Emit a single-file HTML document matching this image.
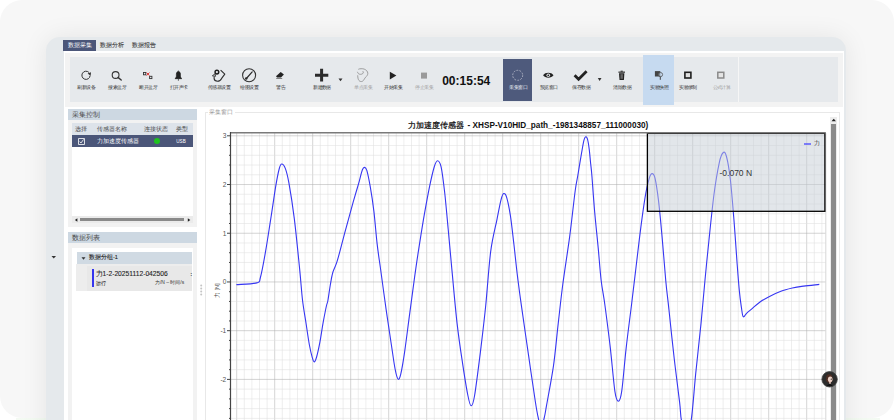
<!DOCTYPE html>
<html><head><meta charset="utf-8">
<style>
html,body{margin:0;padding:0;}
body{width:894px;height:420px;overflow:hidden;background:#fff;position:relative;font-family:"Liberation Sans",sans-serif;}
.abs{position:absolute;}
.t{position:absolute;white-space:nowrap;line-height:1;}
.lbl{position:absolute;white-space:nowrap;font-size:4.5px;letter-spacing:-0.55px;line-height:5px;color:#383838;transform:translateX(calc(-50% + 0.4px));}
.dis{color:#a2a2a2;}
.ico{position:absolute;}
</style></head><body>
<div class="abs" style="left:0;top:0;width:894px;height:418px;border-radius:22px;background:#f7f7f7;"></div>
<div class="abs" style="left:16px;top:418px;width:864px;height:2px;background:linear-gradient(90deg,#f4faf3,#e8f5e6 20%,#e8f5e6 80%,#f4faf3);"></div>
<div class="abs" style="left:46px;top:37px;width:800px;height:420px;border-radius:14px;background:#e5e9ec;box-shadow:0 0 26px rgba(0,0,0,0.08);"></div>
<!-- tabs -->
<div class="abs" style="left:63.4px;top:40px;width:32.6px;height:10.8px;background:#4b5679;"></div>
<div class="t" style="left:68.2px;top:42.7px;font-size:5.6px;color:#fff;">数据采集</div>
<div class="t" style="left:100px;top:42.7px;font-size:5.5px;color:#444;-webkit-text-stroke:0.1px #444;">数据分析</div>
<div class="t" style="left:132.2px;top:42.7px;font-size:5.5px;color:#444;-webkit-text-stroke:0.1px #444;">数据报告</div>
<!-- content -->
<div class="abs" style="left:64px;top:51px;width:780px;height:380px;background:#fff;"></div>
<div class="abs" style="left:65px;top:52.5px;width:778px;height:54px;background:#f3f3f3;"></div>
<div class="abs" style="left:70px;top:57px;width:768px;height:45px;background:#e6e9ec;"></div>
<div class="abs" style="left:737.6px;top:57px;width:1.6px;height:45px;background:#f6f6f6;"></div>
<div class="abs" style="left:503.1px;top:58.7px;width:28.9px;height:42.1px;background:#4e5a7c;"></div>
<div class="abs" style="left:643px;top:54.8px;width:31.2px;height:50px;background:#c6daf0;"></div>

<svg class="ico" style="left:0;top:0" width="894" height="110" viewBox="0 0 894 110">
<!-- refresh -->
<path d="M88.9,72.4 A4.1,4.1 0 1 0 90.1,75.6" fill="none" stroke="#333" stroke-width="1"/>
<path d="M87.6,73.4 L91,72.2 L90.6,75.8Z" fill="#333"/>
<!-- search -->
<circle cx="115.6" cy="75" r="3.4" fill="none" stroke="#333" stroke-width="1.1"/>
<path d="M118,77.4 L121.2,80" stroke="#333" stroke-width="1.4" stroke-linecap="round"/>
<!-- bt disconnect -->
<rect x="143.5" y="72.5" width="2.3" height="2.3" fill="none" stroke="#333" stroke-width="0.9"/>
<rect x="149.6" y="76.3" width="2.3" height="2.3" fill="none" stroke="#333" stroke-width="0.9"/>
<path d="M146.6,72.6 L149.4,75.6 M149.4,72.6 L146.6,75.6" stroke="#e02020" stroke-width="0.9"/>
<!-- bell -->
<path d="M178.4,70.6 L178.4,71.4 M175.6,78.2 C176.6,77 176.4,75.6 176.4,74.4 C176.4,72.6 177.2,71.6 178.4,71.6 C179.6,71.6 180.4,72.6 180.4,74.4 C180.4,75.6 180.2,77 181.2,78.2Z" fill="#222" stroke="#222" stroke-width="0.8"/>
<rect x="174.9" y="78.2" width="7" height="0.9" fill="#222"/>
<circle cx="178.4" cy="79.9" r="0.6" fill="#222"/>
<!-- sensor settings -->
<path d="M220.6,70.2 L224.8,74.2 L221.8,78.2 Q220.2,81.3 217.6,81.3 Q214.3,81.1 214.1,78.4 L214.2,76.4" fill="none" stroke="#2e2e2e" stroke-width="1.1" stroke-linejoin="round"/>
<circle cx="216.9" cy="72.1" r="1.85" fill="none" stroke="#1e1e1e" stroke-width="1.45"/>
<path d="M215,73.8 L212.3,75.8 L215.6,76.3 Z" fill="none" stroke="#333" stroke-width="0.9" stroke-linejoin="round"/>
<!-- draw settings -->
<circle cx="249.1" cy="75.2" r="6.5" fill="none" stroke="#333" stroke-width="1.1"/>
<path d="M252.2,71.9 L246.8,78" stroke="#2a2a2a" stroke-width="1.2" stroke-linecap="round"/>
<circle cx="246.2" cy="78.4" r="1.25" fill="#2a2a2a"/>
<!-- eraser -->
<path d="M276,76.3 L280.7,72 L283.9,74.4 L281,77.4 L277,77.6 Z" fill="#222"/>
<rect x="276.2" y="78.2" width="6" height="0.8" fill="#666"/>
<!-- plus -->
<path d="M321.6,68.8 L321.6,81.6 M315,75.2 L328.3,75.2" stroke="#2b2b2b" stroke-width="3"/>
<path d="M338.5,78.6 L342.5,78.6 L340.5,81.3Z" fill="#333"/>
<!-- single point -->
<path d="M358.3,69.3 C359.5,68.6 362.5,68.5 364.2,69.1 C366.2,69.8 367.8,71.5 367.8,73.3 C367.8,75.2 366.6,76.3 365.6,77.2 C364.6,78.2 363.9,80.5 362.4,81.3 C361.4,81.8 359.8,81.6 358.9,80.4 C358,79.2 357.8,77.6 357.7,75.3" fill="none" stroke="#8a8a8a" stroke-width="0.8"/>
<path d="M357.4,71.8 C357.9,73.2 358.3,73.8 359.5,74.2 C361,74.6 362.8,74 363.3,72.9 C363.4,72 363.1,71.4 362.6,71.1" fill="none" stroke="#8a8a8a" stroke-width="0.8"/>
<!-- play -->
<path d="M389.8,71.8 L396.4,75.6 L389.8,79.4Z" fill="#222"/>
<!-- stop -->
<rect x="421" y="72.6" width="6" height="6" fill="#9a9a9a"/>
<!-- dashed circle -->
<circle cx="517.7" cy="75.3" r="5" fill="none" stroke="#a9aec0" stroke-width="1" stroke-dasharray="1.8 1.3"/>
<!-- eye -->
<path d="M543.1,75.3 C545,72 551.6,72 553.5,75.3 C551.6,78.6 545,78.6 543.1,75.3Z" fill="#222"/>
<circle cx="548.3" cy="75.3" r="1.8" fill="#e6e9ec"/>
<circle cx="548.3" cy="75.3" r="0.9" fill="#222"/>
<!-- check -->
<path d="M574.6,75.2 L578.6,79.2 L586.6,71.2" fill="none" stroke="#222" stroke-width="2.8"/>
<path d="M597.8,78.1 L601.5,78.1 L599.65,81Z" fill="#333"/>
<!-- trash -->
<rect x="618.4" y="71.6" width="6.6" height="1.1" fill="#222"/>
<rect x="620.6" y="70.7" width="2.2" height="1" fill="#222"/>
<path d="M619,73.2 L624.4,73.2 L623.9,80 L619.5,80Z" fill="#222"/>
<rect x="620.5" y="74.2" width="2.4" height="4.6" fill="#666"/>
<!-- snapshot -->
<rect x="654.9" y="71.1" width="5.4" height="5.4" fill="#444"/>
<circle cx="660.5" cy="74.6" r="2.1" fill="rgba(198,218,240,0.5)" stroke="#555" stroke-width="0.8"/>
<path d="M660.3,76.6 L660.3,79.8" stroke="#333" stroke-width="0.9"/>
<!-- record -->
<rect x="684.9" y="72.3" width="6" height="5.7" fill="#e0e0e0" stroke="#1e1e1e" stroke-width="1.6"/>
<!-- formula -->
<rect x="717.8" y="72.3" width="6" height="5.7" fill="#e4e4e4" stroke="#8a8a8a" stroke-width="1.5"/>
</svg>
<div class="lbl" style="left:86px;top:85px;">刷新设备</div>
<div class="lbl" style="left:116.8px;top:85px;">搜索蓝牙</div>
<div class="lbl" style="left:147.7px;top:85px;">断开蓝牙</div>
<div class="lbl" style="left:178.2px;top:85px;">打开声卡</div>
<div class="lbl" style="left:218.5px;top:85px;">传感器设置</div>
<div class="lbl" style="left:249px;top:85px;">绘图设置</div>
<div class="lbl" style="left:280.2px;top:85px;">警告</div>
<div class="lbl" style="left:321.6px;top:85px;">新建数据</div>
<div class="lbl dis" style="left:362.7px;top:85px;">单点采集</div>
<div class="lbl" style="left:393px;top:85px;color:#333;">开始采集</div>
<div class="lbl dis" style="left:424px;top:85px;">停止采集</div>
<div class="t" style="left:442.2px;top:74.5px;font-size:12px;font-weight:bold;color:#111;">00:15:54</div>
<div class="lbl" style="left:517.8px;top:85px;color:#e9ecf3;">采集窗口</div>
<div class="lbl" style="left:548.4px;top:85px;">预览窗口</div>
<div class="lbl" style="left:580.8px;top:85px;">保存数据</div>
<div class="lbl" style="left:621.8px;top:85px;">清除数据</div>
<div class="lbl" style="left:658.8px;top:85px;">实验快照</div>
<div class="lbl" style="left:687.6px;top:85px;color:#333;">实验录制</div>
<div class="lbl dis" style="left:721.1px;top:85px;">公式计算</div>

<!-- left panels -->
<div class="abs" style="left:68px;top:108.6px;width:129.4px;height:118.6px;background:#f2f2f2;"></div>
<div class="abs" style="left:68px;top:108.6px;width:129.4px;height:11px;background:#cdd8e2;"></div>
<div class="t" style="left:71.8px;top:110.8px;font-size:7px;color:#4a4a4a;">采集控制</div>
<div class="abs" style="left:72px;top:123.4px;width:121px;height:99px;background:#fff;"></div>
<div class="abs" style="left:72px;top:123.4px;width:121px;height:11.8px;background:#dde3ea;"></div>
<div class="t" style="left:75px;top:127.1px;font-size:5.5px;color:#4a4a4a;">选择</div>
<div class="t" style="left:96.6px;top:127.1px;font-size:5.5px;color:#4a4a4a;">传感器名称</div>
<div class="t" style="left:143.5px;top:127.1px;font-size:5.5px;color:#4a4a4a;">连接状态</div>
<div class="t" style="left:176.4px;top:127.1px;font-size:5.5px;color:#4a4a4a;">类型</div>
<div class="abs" style="left:72px;top:134.9px;width:121px;height:11.8px;background:#4b5679;"></div>
<svg class="ico" style="left:78px;top:137.7px" width="7" height="7" viewBox="0 0 7 7"><rect x="0.6" y="0.6" width="5.8" height="5.8" fill="none" stroke="#fff" stroke-width="0.8"/><path d="M1.7,3.6 L3,5 L5.6,1.4" fill="none" stroke="#fff" stroke-width="0.8"/></svg>
<div class="t" style="left:96.8px;top:138.9px;font-size:5.5px;color:#fff;">力加速度传感器</div>
<div class="abs" style="left:153.6px;top:137.9px;width:6px;height:6px;border-radius:50%;background:#1ec21e;"></div>
<div class="t" style="left:176.3px;top:139.6px;font-size:4.6px;color:#fff;">USB</div>
<div class="abs" style="left:72px;top:215.5px;width:121px;height:7.5px;background:#ebebeb;"></div>
<div class="abs" style="left:80.2px;top:217.6px;width:104px;height:3.8px;background:#8a8a8a;"></div>
<svg class="ico" style="left:74px;top:216.5px" width="120" height="6" viewBox="0 0 120 6"><path d="M0.9,3 L3.4,1.2 L3.4,4.8Z" fill="#222"/><path d="M116.3,3 L113.8,1.2 L113.8,4.8Z" fill="#222"/></svg>
<!-- panel 2 -->
<div class="abs" style="left:68px;top:232px;width:129.4px;height:200px;background:#f2f2f2;"></div>
<div class="abs" style="left:68px;top:232px;width:129.4px;height:11px;background:#cdd8e2;"></div>
<div class="t" style="left:71.7px;top:234.2px;font-size:7px;color:#4a4a4a;">数据列表</div>
<div class="abs" style="left:72.4px;top:247.5px;width:120.4px;height:200px;background:#fff;"></div>
<div class="abs" style="left:76.8px;top:251.7px;width:114.9px;height:12.5px;background:#d0dae3;"></div>
<svg class="ico" style="left:81px;top:255.5px" width="5" height="5" viewBox="0 0 5 5"><path d="M0.5,1.2 L4.5,1.2 L2.5,3.8Z" fill="#333"/></svg>
<div class="t" style="left:89px;top:255.3px;font-size:5.5px;color:#222;-webkit-text-stroke:0.1px #222;">数据分组-1</div>
<div class="abs" style="left:75.5px;top:264.2px;width:116.2px;height:27px;background:#ededed;"></div>
<div class="abs" style="left:87.4px;top:265.5px;width:104.3px;height:25px;background:#e8e8e8;"></div>
<div class="abs" style="left:92.2px;top:269px;width:1.6px;height:18px;background:#3535ee;"></div>
<div class="t" style="left:95.5px;top:271px;font-size:6.7px;color:#222;-webkit-text-stroke:0.1px #222;">力1-2-20251112-042506</div>
<div class="t" style="left:190.3px;top:270.8px;font-size:6px;font-weight:bold;color:#222;">:</div>
<div class="t" style="left:95.5px;top:281.6px;font-size:4.6px;color:#333;-webkit-text-stroke:0.1px #333;">运行</div>
<div class="t" style="left:155px;top:281.4px;font-size:4.9px;color:#333;">力/N – 时间/s</div>
<svg class="ico" style="left:48px;top:253px" width="10" height="8" viewBox="0 0 10 8"><path d="M3.5,3 L8,3 L5.75,5.6Z" fill="#333"/></svg>
<!-- splitter dots -->
<svg class="ico" style="left:199px;top:284px" width="5" height="12" viewBox="0 0 5 12"><g fill="#c4c4c4"><circle cx="2.2" cy="1.6" r="1"/><circle cx="2.2" cy="4.6" r="1"/><circle cx="2.2" cy="7.6" r="1"/><circle cx="2.2" cy="10.6" r="1"/></g></svg>
<!-- chart groupbox -->
<div class="abs" style="left:205px;top:111.9px;width:635.3px;height:320px;border:1px solid #e8e8e8;box-sizing:border-box;background:#fff;"></div>
<div class="t" style="left:207.5px;top:109.5px;padding:0 1.5px;background:#fff;font-size:5.6px;color:#999;">采集窗口</div>
<svg class="abs" style="left:0;top:0" width="894" height="420" viewBox="0 0 894 420">
<rect x="230.5" y="133" width="595.3" height="297" fill="#fff"/>
<line x1="236.70" y1="133" x2="236.70" y2="430" stroke="#b0b0b0" stroke-width="0.55"/><line x1="244.30" y1="133" x2="244.30" y2="430" stroke="#e0e0e0" stroke-width="0.55"/><line x1="251.90" y1="133" x2="251.90" y2="430" stroke="#e0e0e0" stroke-width="0.55"/><line x1="259.50" y1="133" x2="259.50" y2="430" stroke="#e0e0e0" stroke-width="0.55"/><line x1="267.10" y1="133" x2="267.10" y2="430" stroke="#e0e0e0" stroke-width="0.55"/><line x1="274.70" y1="133" x2="274.70" y2="430" stroke="#b0b0b0" stroke-width="0.55"/><line x1="282.30" y1="133" x2="282.30" y2="430" stroke="#e0e0e0" stroke-width="0.55"/><line x1="289.90" y1="133" x2="289.90" y2="430" stroke="#e0e0e0" stroke-width="0.55"/><line x1="297.50" y1="133" x2="297.50" y2="430" stroke="#e0e0e0" stroke-width="0.55"/><line x1="305.10" y1="133" x2="305.10" y2="430" stroke="#e0e0e0" stroke-width="0.55"/><line x1="312.70" y1="133" x2="312.70" y2="430" stroke="#b0b0b0" stroke-width="0.55"/><line x1="320.30" y1="133" x2="320.30" y2="430" stroke="#e0e0e0" stroke-width="0.55"/><line x1="327.90" y1="133" x2="327.90" y2="430" stroke="#e0e0e0" stroke-width="0.55"/><line x1="335.50" y1="133" x2="335.50" y2="430" stroke="#e0e0e0" stroke-width="0.55"/><line x1="343.10" y1="133" x2="343.10" y2="430" stroke="#e0e0e0" stroke-width="0.55"/><line x1="350.70" y1="133" x2="350.70" y2="430" stroke="#b0b0b0" stroke-width="0.55"/><line x1="358.30" y1="133" x2="358.30" y2="430" stroke="#e0e0e0" stroke-width="0.55"/><line x1="365.90" y1="133" x2="365.90" y2="430" stroke="#e0e0e0" stroke-width="0.55"/><line x1="373.50" y1="133" x2="373.50" y2="430" stroke="#e0e0e0" stroke-width="0.55"/><line x1="381.10" y1="133" x2="381.10" y2="430" stroke="#e0e0e0" stroke-width="0.55"/><line x1="388.70" y1="133" x2="388.70" y2="430" stroke="#b0b0b0" stroke-width="0.55"/><line x1="396.30" y1="133" x2="396.30" y2="430" stroke="#e0e0e0" stroke-width="0.55"/><line x1="403.90" y1="133" x2="403.90" y2="430" stroke="#e0e0e0" stroke-width="0.55"/><line x1="411.50" y1="133" x2="411.50" y2="430" stroke="#e0e0e0" stroke-width="0.55"/><line x1="419.10" y1="133" x2="419.10" y2="430" stroke="#e0e0e0" stroke-width="0.55"/><line x1="426.70" y1="133" x2="426.70" y2="430" stroke="#b0b0b0" stroke-width="0.55"/><line x1="434.30" y1="133" x2="434.30" y2="430" stroke="#e0e0e0" stroke-width="0.55"/><line x1="441.90" y1="133" x2="441.90" y2="430" stroke="#e0e0e0" stroke-width="0.55"/><line x1="449.50" y1="133" x2="449.50" y2="430" stroke="#e0e0e0" stroke-width="0.55"/><line x1="457.10" y1="133" x2="457.10" y2="430" stroke="#e0e0e0" stroke-width="0.55"/><line x1="464.70" y1="133" x2="464.70" y2="430" stroke="#b0b0b0" stroke-width="0.55"/><line x1="472.30" y1="133" x2="472.30" y2="430" stroke="#e0e0e0" stroke-width="0.55"/><line x1="479.90" y1="133" x2="479.90" y2="430" stroke="#e0e0e0" stroke-width="0.55"/><line x1="487.50" y1="133" x2="487.50" y2="430" stroke="#e0e0e0" stroke-width="0.55"/><line x1="495.10" y1="133" x2="495.10" y2="430" stroke="#e0e0e0" stroke-width="0.55"/><line x1="502.70" y1="133" x2="502.70" y2="430" stroke="#b0b0b0" stroke-width="0.55"/><line x1="510.30" y1="133" x2="510.30" y2="430" stroke="#e0e0e0" stroke-width="0.55"/><line x1="517.90" y1="133" x2="517.90" y2="430" stroke="#e0e0e0" stroke-width="0.55"/><line x1="525.50" y1="133" x2="525.50" y2="430" stroke="#e0e0e0" stroke-width="0.55"/><line x1="533.10" y1="133" x2="533.10" y2="430" stroke="#e0e0e0" stroke-width="0.55"/><line x1="540.70" y1="133" x2="540.70" y2="430" stroke="#b0b0b0" stroke-width="0.55"/><line x1="548.30" y1="133" x2="548.30" y2="430" stroke="#e0e0e0" stroke-width="0.55"/><line x1="555.90" y1="133" x2="555.90" y2="430" stroke="#e0e0e0" stroke-width="0.55"/><line x1="563.50" y1="133" x2="563.50" y2="430" stroke="#e0e0e0" stroke-width="0.55"/><line x1="571.10" y1="133" x2="571.10" y2="430" stroke="#e0e0e0" stroke-width="0.55"/><line x1="578.70" y1="133" x2="578.70" y2="430" stroke="#b0b0b0" stroke-width="0.55"/><line x1="586.30" y1="133" x2="586.30" y2="430" stroke="#e0e0e0" stroke-width="0.55"/><line x1="593.90" y1="133" x2="593.90" y2="430" stroke="#e0e0e0" stroke-width="0.55"/><line x1="601.50" y1="133" x2="601.50" y2="430" stroke="#e0e0e0" stroke-width="0.55"/><line x1="609.10" y1="133" x2="609.10" y2="430" stroke="#e0e0e0" stroke-width="0.55"/><line x1="616.70" y1="133" x2="616.70" y2="430" stroke="#b0b0b0" stroke-width="0.55"/><line x1="624.30" y1="133" x2="624.30" y2="430" stroke="#e0e0e0" stroke-width="0.55"/><line x1="631.90" y1="133" x2="631.90" y2="430" stroke="#e0e0e0" stroke-width="0.55"/><line x1="639.50" y1="133" x2="639.50" y2="430" stroke="#e0e0e0" stroke-width="0.55"/><line x1="647.10" y1="133" x2="647.10" y2="430" stroke="#e0e0e0" stroke-width="0.55"/><line x1="654.70" y1="133" x2="654.70" y2="430" stroke="#b0b0b0" stroke-width="0.55"/><line x1="662.30" y1="133" x2="662.30" y2="430" stroke="#e0e0e0" stroke-width="0.55"/><line x1="669.90" y1="133" x2="669.90" y2="430" stroke="#e0e0e0" stroke-width="0.55"/><line x1="677.50" y1="133" x2="677.50" y2="430" stroke="#e0e0e0" stroke-width="0.55"/><line x1="685.10" y1="133" x2="685.10" y2="430" stroke="#e0e0e0" stroke-width="0.55"/><line x1="692.70" y1="133" x2="692.70" y2="430" stroke="#b0b0b0" stroke-width="0.55"/><line x1="700.30" y1="133" x2="700.30" y2="430" stroke="#e0e0e0" stroke-width="0.55"/><line x1="707.90" y1="133" x2="707.90" y2="430" stroke="#e0e0e0" stroke-width="0.55"/><line x1="715.50" y1="133" x2="715.50" y2="430" stroke="#e0e0e0" stroke-width="0.55"/><line x1="723.10" y1="133" x2="723.10" y2="430" stroke="#e0e0e0" stroke-width="0.55"/><line x1="730.70" y1="133" x2="730.70" y2="430" stroke="#b0b0b0" stroke-width="0.55"/><line x1="738.30" y1="133" x2="738.30" y2="430" stroke="#e0e0e0" stroke-width="0.55"/><line x1="745.90" y1="133" x2="745.90" y2="430" stroke="#e0e0e0" stroke-width="0.55"/><line x1="753.50" y1="133" x2="753.50" y2="430" stroke="#e0e0e0" stroke-width="0.55"/><line x1="761.10" y1="133" x2="761.10" y2="430" stroke="#e0e0e0" stroke-width="0.55"/><line x1="768.70" y1="133" x2="768.70" y2="430" stroke="#b0b0b0" stroke-width="0.55"/><line x1="776.30" y1="133" x2="776.30" y2="430" stroke="#e0e0e0" stroke-width="0.55"/><line x1="783.90" y1="133" x2="783.90" y2="430" stroke="#e0e0e0" stroke-width="0.55"/><line x1="791.50" y1="133" x2="791.50" y2="430" stroke="#e0e0e0" stroke-width="0.55"/><line x1="799.10" y1="133" x2="799.10" y2="430" stroke="#e0e0e0" stroke-width="0.55"/><line x1="806.70" y1="133" x2="806.70" y2="430" stroke="#b0b0b0" stroke-width="0.55"/><line x1="814.30" y1="133" x2="814.30" y2="430" stroke="#e0e0e0" stroke-width="0.55"/><line x1="821.90" y1="133" x2="821.90" y2="430" stroke="#e0e0e0" stroke-width="0.55"/><line x1="230.5" y1="135.80" x2="825.8" y2="135.80" stroke="#b0b0b0" stroke-width="0.55"/><line x1="230.5" y1="145.54" x2="825.8" y2="145.54" stroke="#e0e0e0" stroke-width="0.55"/><line x1="230.5" y1="155.29" x2="825.8" y2="155.29" stroke="#e0e0e0" stroke-width="0.55"/><line x1="230.5" y1="165.03" x2="825.8" y2="165.03" stroke="#e0e0e0" stroke-width="0.55"/><line x1="230.5" y1="174.78" x2="825.8" y2="174.78" stroke="#e0e0e0" stroke-width="0.55"/><line x1="230.5" y1="184.52" x2="825.8" y2="184.52" stroke="#b0b0b0" stroke-width="0.55"/><line x1="230.5" y1="194.26" x2="825.8" y2="194.26" stroke="#e0e0e0" stroke-width="0.55"/><line x1="230.5" y1="204.01" x2="825.8" y2="204.01" stroke="#e0e0e0" stroke-width="0.55"/><line x1="230.5" y1="213.75" x2="825.8" y2="213.75" stroke="#e0e0e0" stroke-width="0.55"/><line x1="230.5" y1="223.50" x2="825.8" y2="223.50" stroke="#e0e0e0" stroke-width="0.55"/><line x1="230.5" y1="233.24" x2="825.8" y2="233.24" stroke="#b0b0b0" stroke-width="0.55"/><line x1="230.5" y1="242.98" x2="825.8" y2="242.98" stroke="#e0e0e0" stroke-width="0.55"/><line x1="230.5" y1="252.73" x2="825.8" y2="252.73" stroke="#e0e0e0" stroke-width="0.55"/><line x1="230.5" y1="262.47" x2="825.8" y2="262.47" stroke="#e0e0e0" stroke-width="0.55"/><line x1="230.5" y1="272.22" x2="825.8" y2="272.22" stroke="#e0e0e0" stroke-width="0.55"/><line x1="230.5" y1="281.96" x2="825.8" y2="281.96" stroke="#b0b0b0" stroke-width="0.55"/><line x1="230.5" y1="291.70" x2="825.8" y2="291.70" stroke="#e0e0e0" stroke-width="0.55"/><line x1="230.5" y1="301.45" x2="825.8" y2="301.45" stroke="#e0e0e0" stroke-width="0.55"/><line x1="230.5" y1="311.19" x2="825.8" y2="311.19" stroke="#e0e0e0" stroke-width="0.55"/><line x1="230.5" y1="320.94" x2="825.8" y2="320.94" stroke="#e0e0e0" stroke-width="0.55"/><line x1="230.5" y1="330.68" x2="825.8" y2="330.68" stroke="#b0b0b0" stroke-width="0.55"/><line x1="230.5" y1="340.42" x2="825.8" y2="340.42" stroke="#e0e0e0" stroke-width="0.55"/><line x1="230.5" y1="350.17" x2="825.8" y2="350.17" stroke="#e0e0e0" stroke-width="0.55"/><line x1="230.5" y1="359.91" x2="825.8" y2="359.91" stroke="#e0e0e0" stroke-width="0.55"/><line x1="230.5" y1="369.66" x2="825.8" y2="369.66" stroke="#e0e0e0" stroke-width="0.55"/><line x1="230.5" y1="379.40" x2="825.8" y2="379.40" stroke="#b0b0b0" stroke-width="0.55"/><line x1="230.5" y1="389.14" x2="825.8" y2="389.14" stroke="#e0e0e0" stroke-width="0.55"/><line x1="230.5" y1="398.89" x2="825.8" y2="398.89" stroke="#e0e0e0" stroke-width="0.55"/><line x1="230.5" y1="408.63" x2="825.8" y2="408.63" stroke="#e0e0e0" stroke-width="0.55"/><line x1="230.5" y1="418.38" x2="825.8" y2="418.38" stroke="#e0e0e0" stroke-width="0.55"/>
<line x1="825.8" y1="133" x2="825.8" y2="430" stroke="#d8d8d8" stroke-width="1"/>
<path d="M236.4,284.6 C239.8,284.3 252.8,284.1 256.8,282.9 C260.8,281.7 258.9,282.9 260.4,277.5 C261.9,272.1 264.0,260.5 265.7,250.7 C267.4,240.9 269.1,229.3 270.8,218.6 C272.5,207.9 274.3,194.8 275.7,186.4 C277.1,178.1 278.3,172.2 279.3,168.5 C280.3,164.8 280.7,164.0 281.7,164.0 C282.7,164.0 284.2,165.4 285.4,168.6 C286.6,171.8 287.4,174.6 288.9,182.9 C290.4,191.2 292.5,204.3 294.3,218.6 C296.1,232.9 298.2,255.0 299.6,268.6 C301.0,282.2 301.4,290.6 302.5,300.0 C303.6,309.4 305.2,317.5 306.3,325.0 C307.4,332.5 308.4,339.7 309.4,345.0 C310.4,350.3 311.3,354.1 312.1,356.9 C312.9,359.7 313.4,361.9 314.2,361.9 C314.9,361.9 315.6,360.4 316.6,357.0 C317.6,353.6 318.9,347.6 320.0,341.7 C321.1,335.8 322.2,327.6 323.3,321.7 C324.4,315.8 325.6,309.6 326.4,306.0 C327.2,302.4 327.4,303.5 328.0,300.0 C328.6,296.5 329.5,289.6 330.3,285.0 C331.1,280.4 331.7,276.4 332.8,272.5 C333.9,268.6 335.2,267.4 337.0,261.7 C338.8,256.0 341.3,245.8 343.3,238.3 C345.3,230.8 347.5,222.8 349.2,216.7 C350.9,210.6 352.1,206.1 353.3,201.7 C354.6,197.2 355.7,193.4 356.7,190.0 C357.7,186.6 358.4,184.5 359.3,181.1 C360.2,177.7 361.5,172.1 362.4,169.8 C363.3,167.5 363.8,167.3 364.5,167.4 C365.2,167.5 365.9,167.4 366.9,170.6 C367.8,173.8 369.0,179.6 370.2,186.4 C371.4,193.2 372.8,201.9 373.9,211.4 C375.0,220.9 376.0,233.8 377.1,243.6 C378.2,253.4 379.2,259.1 380.7,270.0 C382.2,280.9 384.3,296.8 386.1,309.3 C387.9,321.8 389.9,335.1 391.4,345.0 C392.9,354.9 393.9,362.8 395.0,368.5 C396.1,374.2 397.1,378.0 398.0,379.0 C398.9,380.0 399.6,378.8 400.7,374.3 C401.8,369.8 403.1,362.3 404.6,352.1 C406.1,341.9 408.1,325.4 409.8,312.9 C411.5,300.4 413.2,286.9 414.6,277.1 C416.0,267.3 416.4,264.1 417.9,254.3 C419.4,244.6 421.7,229.9 423.6,218.6 C425.6,207.3 427.8,195.0 429.6,186.4 C431.4,177.8 432.9,171.3 434.2,167.0 C435.5,162.7 436.4,160.7 437.5,160.7 C438.6,160.7 439.9,161.6 441.1,166.8 C442.3,172.0 443.4,181.4 444.6,191.8 C445.8,202.2 447.0,216.5 448.2,229.3 C449.4,242.1 450.3,252.9 451.8,268.6 C453.3,284.3 455.3,307.9 457.1,323.6 C458.9,339.3 460.7,350.9 462.5,362.9 C464.3,374.9 466.4,388.4 467.9,395.5 C469.3,402.6 470.1,405.8 471.2,405.8 C472.3,405.8 473.1,404.4 474.6,395.5 C476.1,386.6 478.5,367.1 480.4,352.1 C482.2,337.1 484.0,322.5 485.7,305.7 C487.4,288.9 488.8,265.8 490.7,251.4 C492.6,237.0 495.3,227.9 497.0,219.3 C498.7,210.7 499.9,204.1 501.0,199.8 C502.1,195.5 502.7,193.8 503.7,193.5 C504.7,193.2 505.7,194.2 506.8,197.9 C507.9,201.6 509.2,208.0 510.4,215.7 C511.6,223.4 512.7,234.2 513.9,244.3 C515.1,254.4 516.2,266.2 517.5,276.4 C518.8,286.6 519.5,292.5 521.4,305.7 C523.2,318.9 526.3,339.6 528.6,355.7 C530.9,371.8 533.8,391.6 535.4,402.0 C537.0,412.4 537.3,413.8 538.3,418.0 C539.3,422.2 540.2,427.0 541.2,427.0 C542.2,427.0 543.3,421.6 544.2,418.0 C545.1,414.4 545.0,414.3 546.5,405.7 C548.0,397.1 551.4,380.1 553.4,366.4 C555.4,352.7 556.6,337.3 558.2,323.6 C559.8,309.9 560.9,298.7 562.8,284.3 C564.7,269.9 567.5,252.7 569.6,237.1 C571.7,221.5 573.8,201.0 575.2,190.7 C576.6,180.3 576.9,181.2 577.9,175.0 C578.9,168.8 580.5,159.2 581.5,153.4 C582.5,147.6 583.2,143.1 583.9,140.3 C584.6,137.5 585.1,137.0 585.7,136.8 C586.3,136.6 586.9,136.9 587.5,139.1 C588.1,141.3 588.8,145.8 589.3,149.9 C589.8,154.1 590.2,159.5 590.7,164.0 C591.2,168.5 591.4,169.3 592.0,177.0 C592.6,184.7 593.5,198.2 594.5,210.0 C595.5,221.8 597.1,236.2 598.2,247.9 C599.3,259.6 600.0,270.4 601.1,280.0 C602.2,289.6 603.5,294.3 605.0,305.7 C606.5,317.1 608.8,334.3 610.4,348.6 C612.0,362.9 613.6,382.6 614.9,391.4 C616.2,400.2 617.3,401.2 618.4,401.2 C619.5,401.2 620.4,400.2 621.7,391.4 C623.0,382.6 624.5,362.9 626.1,348.6 C627.7,334.3 629.8,318.8 631.4,305.7 C633.0,292.6 634.3,281.4 635.7,270.0 C637.1,258.6 638.1,249.1 639.6,237.1 C641.1,225.1 643.4,207.7 645.0,197.9 C646.6,188.1 648.1,182.2 649.3,178.2 C650.5,174.1 651.1,173.6 652.1,173.6 C653.1,173.6 653.9,173.6 655.0,178.2 C656.1,182.8 657.4,191.6 658.6,201.4 C659.8,211.2 660.9,224.0 662.1,237.1 C663.3,250.2 664.6,268.0 665.7,280.0 C666.8,292.0 667.5,296.1 668.9,309.3 C670.3,322.5 672.5,343.8 674.3,359.3 C676.1,374.8 678.4,392.0 679.6,402.1 C680.8,412.2 680.3,414.9 681.4,420.0 C682.5,425.1 684.7,433.0 686.3,433.0 C687.9,433.0 689.6,429.9 691.2,420.0 C692.8,410.1 694.1,389.7 695.7,373.6 C697.3,357.5 699.5,339.2 701.0,323.6 C702.5,308.0 703.7,293.8 705.0,280.0 C706.3,266.2 707.4,255.0 708.9,240.7 C710.4,226.4 712.3,207.3 714.0,194.3 C715.7,181.3 717.8,169.6 719.3,162.6 C720.8,155.6 722.1,153.4 723.3,152.5 C724.5,151.6 725.4,152.4 726.6,157.0 C727.8,161.6 729.2,169.6 730.4,180.0 C731.6,190.4 732.8,205.6 733.9,219.3 C735.0,233.0 736.1,250.0 737.0,262.0 C737.9,274.0 738.6,283.7 739.4,291.4 C740.1,299.1 740.9,303.8 741.5,308.0 C742.1,312.2 742.4,315.8 743.2,316.7 C744.1,317.6 745.1,314.7 746.6,313.3 C748.1,311.9 750.2,310.3 752.4,308.4 C754.6,306.5 757.1,304.0 760.0,302.0 C762.9,300.0 766.0,298.2 769.5,296.4 C773.0,294.6 777.1,292.6 780.9,291.2 C784.7,289.8 788.5,288.9 792.3,288.0 C796.1,287.1 799.2,286.7 803.7,286.1 C808.2,285.5 816.7,284.7 819.3,284.4" fill="none" stroke="#3636f2" stroke-width="1.1" stroke-linejoin="round"/>
<rect x="647.4" y="133.4" width="177.5" height="77.9" fill="rgba(198,205,213,0.5)" stroke="#000" stroke-width="1.3"/>
<line x1="230.5" y1="132.8" x2="825.8" y2="132.8" stroke="#7a7a7a" stroke-width="1.6"/>
<line x1="230.5" y1="132" x2="230.5" y2="430" stroke="#444" stroke-width="1.2"/>
<line x1="227.0" y1="135.80" x2="230.5" y2="135.80" stroke="#444" stroke-width="1"/><line x1="229.0" y1="145.54" x2="230.5" y2="145.54" stroke="#444" stroke-width="1"/><line x1="229.0" y1="155.29" x2="230.5" y2="155.29" stroke="#444" stroke-width="1"/><line x1="229.0" y1="165.03" x2="230.5" y2="165.03" stroke="#444" stroke-width="1"/><line x1="229.0" y1="174.78" x2="230.5" y2="174.78" stroke="#444" stroke-width="1"/><line x1="227.0" y1="184.52" x2="230.5" y2="184.52" stroke="#444" stroke-width="1"/><line x1="229.0" y1="194.26" x2="230.5" y2="194.26" stroke="#444" stroke-width="1"/><line x1="229.0" y1="204.01" x2="230.5" y2="204.01" stroke="#444" stroke-width="1"/><line x1="229.0" y1="213.75" x2="230.5" y2="213.75" stroke="#444" stroke-width="1"/><line x1="229.0" y1="223.50" x2="230.5" y2="223.50" stroke="#444" stroke-width="1"/><line x1="227.0" y1="233.24" x2="230.5" y2="233.24" stroke="#444" stroke-width="1"/><line x1="229.0" y1="242.98" x2="230.5" y2="242.98" stroke="#444" stroke-width="1"/><line x1="229.0" y1="252.73" x2="230.5" y2="252.73" stroke="#444" stroke-width="1"/><line x1="229.0" y1="262.47" x2="230.5" y2="262.47" stroke="#444" stroke-width="1"/><line x1="229.0" y1="272.22" x2="230.5" y2="272.22" stroke="#444" stroke-width="1"/><line x1="227.0" y1="281.96" x2="230.5" y2="281.96" stroke="#444" stroke-width="1"/><line x1="229.0" y1="291.70" x2="230.5" y2="291.70" stroke="#444" stroke-width="1"/><line x1="229.0" y1="301.45" x2="230.5" y2="301.45" stroke="#444" stroke-width="1"/><line x1="229.0" y1="311.19" x2="230.5" y2="311.19" stroke="#444" stroke-width="1"/><line x1="229.0" y1="320.94" x2="230.5" y2="320.94" stroke="#444" stroke-width="1"/><line x1="227.0" y1="330.68" x2="230.5" y2="330.68" stroke="#444" stroke-width="1"/><line x1="229.0" y1="340.42" x2="230.5" y2="340.42" stroke="#444" stroke-width="1"/><line x1="229.0" y1="350.17" x2="230.5" y2="350.17" stroke="#444" stroke-width="1"/><line x1="229.0" y1="359.91" x2="230.5" y2="359.91" stroke="#444" stroke-width="1"/><line x1="229.0" y1="369.66" x2="230.5" y2="369.66" stroke="#444" stroke-width="1"/><line x1="227.0" y1="379.40" x2="230.5" y2="379.40" stroke="#444" stroke-width="1"/><line x1="229.0" y1="389.14" x2="230.5" y2="389.14" stroke="#444" stroke-width="1"/><line x1="229.0" y1="398.89" x2="230.5" y2="398.89" stroke="#444" stroke-width="1"/><line x1="229.0" y1="408.63" x2="230.5" y2="408.63" stroke="#444" stroke-width="1"/><line x1="229.0" y1="418.38" x2="230.5" y2="418.38" stroke="#444" stroke-width="1"/>
<g font-family="Liberation Sans" font-size="6.6" fill="#555"><text x="226.3" y="138.20" text-anchor="end">3</text><text x="226.3" y="186.92" text-anchor="end">2</text><text x="226.3" y="235.64" text-anchor="end">1</text><text x="226.3" y="284.36" text-anchor="end">0</text><text x="226.3" y="333.08" text-anchor="end">-1</text><text x="226.3" y="381.80" text-anchor="end">-2</text></g>
<line x1="804" y1="144" x2="811" y2="144" stroke="#4444ff" stroke-width="1.3"/>
</svg>
<div class="t" style="left:407.6px;top:121.5px;font-size:8.25px;color:#111;-webkit-text-stroke:0.25px #111;">力加速度传感器</div><div class="t" style="left:467.6px;top:122.2px;font-size:8.2px;font-weight:bold;color:#111;">-</div><div class="t" style="left:472.6px;top:122.2px;font-size:8.2px;font-weight:bold;color:#111;">XHSP-V10HID_path_-1981348857_111000030)</div>
<div class="t" style="left:719.5px;top:169px;font-size:8.5px;color:#333;">-0.070 N</div>
<div class="t" style="left:813.5px;top:140.8px;font-size:5.5px;color:#333;">力</div>
<div class="t" style="left:214.9px;top:298.3px;font-size:5.5px;color:#444;transform:rotate(-90deg);transform-origin:0 0;">力 [N]</div>
<!-- scrollbar -->
<div class="abs" style="left:829.5px;top:116.5px;width:7.5px;height:310px;background:#ececec;"></div>
<svg class="ico" style="left:829.5px;top:117px" width="8" height="6" viewBox="0 0 8 6"><path d="M1.5,4.3 L6,4.3 L3.75,1.8Z" fill="#222"/></svg>
<div class="abs" style="left:831px;top:124.4px;width:4.5px;height:300px;background:#8a8a8a;"></div>
<!-- avatar -->
<svg class="ico" style="left:819px;top:369px" width="22" height="22" viewBox="0 0 22 22">
<circle cx="10.6" cy="10.3" r="7.7" fill="#2c2c2c" stroke="#3e3e3e" stroke-width="0.8"/>
<ellipse cx="10.3" cy="9.6" rx="3.3" ry="4.3" fill="#4e2e24"/>
<ellipse cx="11.2" cy="10.3" rx="2.3" ry="2.9" fill="#ead0c6"/>
<circle cx="12.3" cy="10.2" r="0.6" fill="#222"/>
<path d="M7.6,17 Q10.6,13.2 13.6,17Z" fill="#111"/>
<rect x="10.2" y="12.8" width="1.6" height="2" fill="#e4c4ba"/>
</svg>
</body></html>
